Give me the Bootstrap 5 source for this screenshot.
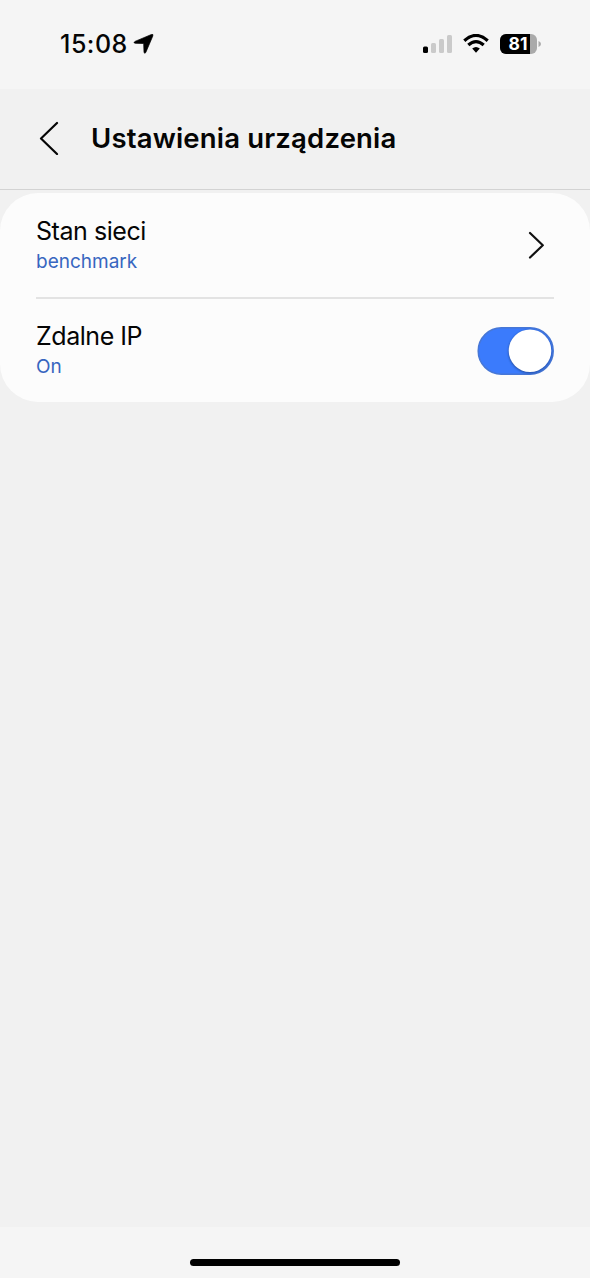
<!DOCTYPE html>
<html lang="pl">
<head>
<meta charset="utf-8">
<meta name="viewport" content="width=device-width, initial-scale=1">
<title>Ustawienia urządzenia</title>
<link href="https://cdn.jsdelivr.net/npm/bootstrap@5.3.0/dist/css/bootstrap.min.css" rel="stylesheet">
<style>
body { font-family: Inter, "Liberation Sans", sans-serif; background: #f1f1f1; color: #050505; }
svg { display: block; flex: none; }
.status-bar { height: 89px; background: #f5f5f5; padding: 0 49px 0 60px; }
.status-row { height: 87px; }
.clock { font-size: 25px; font-weight: 500; line-height: 30px; letter-spacing: .5px; }
.app-header { height: 101px; border-bottom: 1px solid #d3d3d3; padding: 0 39px 2px; gap: 32px; }
.app-title { font-size: 27.5px; font-weight: 600; line-height: 34px; letter-spacing: .18px; }
.panel { margin-top: 3px; height: 209px; background: #fcfcfc; border-radius: 38px; padding: 0 36px; }
.setting { height: 104px; }
.setting + .setting { border-top: 2px solid #e3e3e3; height: 105px; }
.setting-name { font-size: 25px; line-height: 32px; letter-spacing: -.45px; }
.setting-value { font-size: 19px; line-height: 28px; padding-top: 1px; color: #3766c0; }
.setting + .setting .setting-name { margin-top: -1px; }
.home-area { height: 51px; background: #f5f5f5; padding-top: 32px; }
.home-bar { width: 210px; height: 7px; background: #000; }
</style>
</head>
<body>
<div class="d-flex flex-column vh-100 overflow-hidden">
  <div class="status-bar">
    <div class="status-row d-flex align-items-center justify-content-between">
      <div class="d-flex align-items-center">
        <span class="clock">15:08</span>
        <svg class="ms-1" width="22" height="22" viewBox="0 0 22 22"><path d="M19.400 1.500Q21.600 .8 20.800 3L13.900 19.200Q12.700 21.500 12 19.200L11.700 11.300Q11.700 10.500 11 10.500L3.200 10.300Q.8 9.700 3 8.400Z" stroke="#000" stroke-width=".7"/></svg>
      </div>
      <div class="d-flex align-items-center">
        <svg width="30" height="20" viewBox="0 0 30 20"><rect x="1" y="12.500" width="5" height="6.500" rx="1.500"/><g fill="#cacaca"><rect x="9" y="9" width="5" height="10" rx="1.500"/><rect x="17" y="5" width="5" height="14" rx="1.500"/><rect x="25" y="1" width="5" height="18" rx="1.500"/></g></svg>
        <svg class="ms-2" width="32" height="20" viewBox="0 0 32 20"><path d="M4.300 6.700Q16 -3.800 27.700 6.700M8.300 11Q16 4.200 23.700 11" fill="none" stroke="#000" stroke-width="3.200"/><path d="M12.200 14.500Q16 11.500 19.800 14.500L16 18.800Z"/></svg>
        <svg class="ms-2" width="41" height="20" viewBox="0 0 41 20"><defs><clipPath id="cell"><rect width="37" height="20" rx="6"/></clipPath></defs><g clip-path="url(#cell)"><rect width="37" height="20" fill="#aaa"/><rect width="30" height="20"/></g><path d="M38.500 7Q41 8 41 10T38.500 13Z" fill="#aaa"/><text x="18" y="16" text-anchor="middle" font-size="17.500" font-weight="700" fill="#fff">81</text></svg>
      </div>
    </div>
  </div>
  <header class="app-header d-flex align-items-center">
    <svg width="20" height="34" viewBox="0 0 20 34"><path d="M18 2L2 17.500L18 33" fill="none" stroke="#050505" stroke-width="2.200" stroke-linecap="round" stroke-linejoin="round"/></svg>
    <h1 class="app-title mb-0">Ustawienia urządzenia</h1>
  </header>
  <main class="flex-grow-1">
    <div class="panel">
      <div class="setting d-flex align-items-center justify-content-between">
        <div>
          <div class="setting-name">Stan sieci</div>
          <div class="setting-value">benchmark</div>
        </div>
        <svg class="me-2" width="18" height="28" viewBox="0 0 18 28"><path d="M2 2L14.800 14.300L2 26.500" fill="none" stroke="#111" stroke-width="2.200" stroke-linecap="round" stroke-linejoin="round"/></svg>
      </div>
      <div class="setting d-flex align-items-center justify-content-between">
        <div>
          <div class="setting-name">Zdalne IP</div>
          <div class="setting-value">On</div>
        </div>
        <svg width="77" height="48" viewBox="0 0 77 48" role="img" aria-label="On"><defs><filter id="soft"><feGaussianBlur stdDeviation="1"/></filter></defs><rect x="1.200" y=".8" width="75" height="46.400" rx="23.200" fill="#3b7bfc" stroke="#4777d6" stroke-width="1.500"/><circle cx="53" cy="24.600" r="21.500" fill="#234c9c" filter="url(#soft)"/><circle cx="53" cy="23.700" r="21.300" fill="#fff"/></svg>
      </div>
    </div>
  </main>
  <div class="home-area"><div class="home-bar rounded-pill mx-auto"></div></div>
</div>
<script src="https://cdn.jsdelivr.net/npm/bootstrap@5.3.0/dist/js/bootstrap.bundle.min.js"></script>
</body>
</html>
